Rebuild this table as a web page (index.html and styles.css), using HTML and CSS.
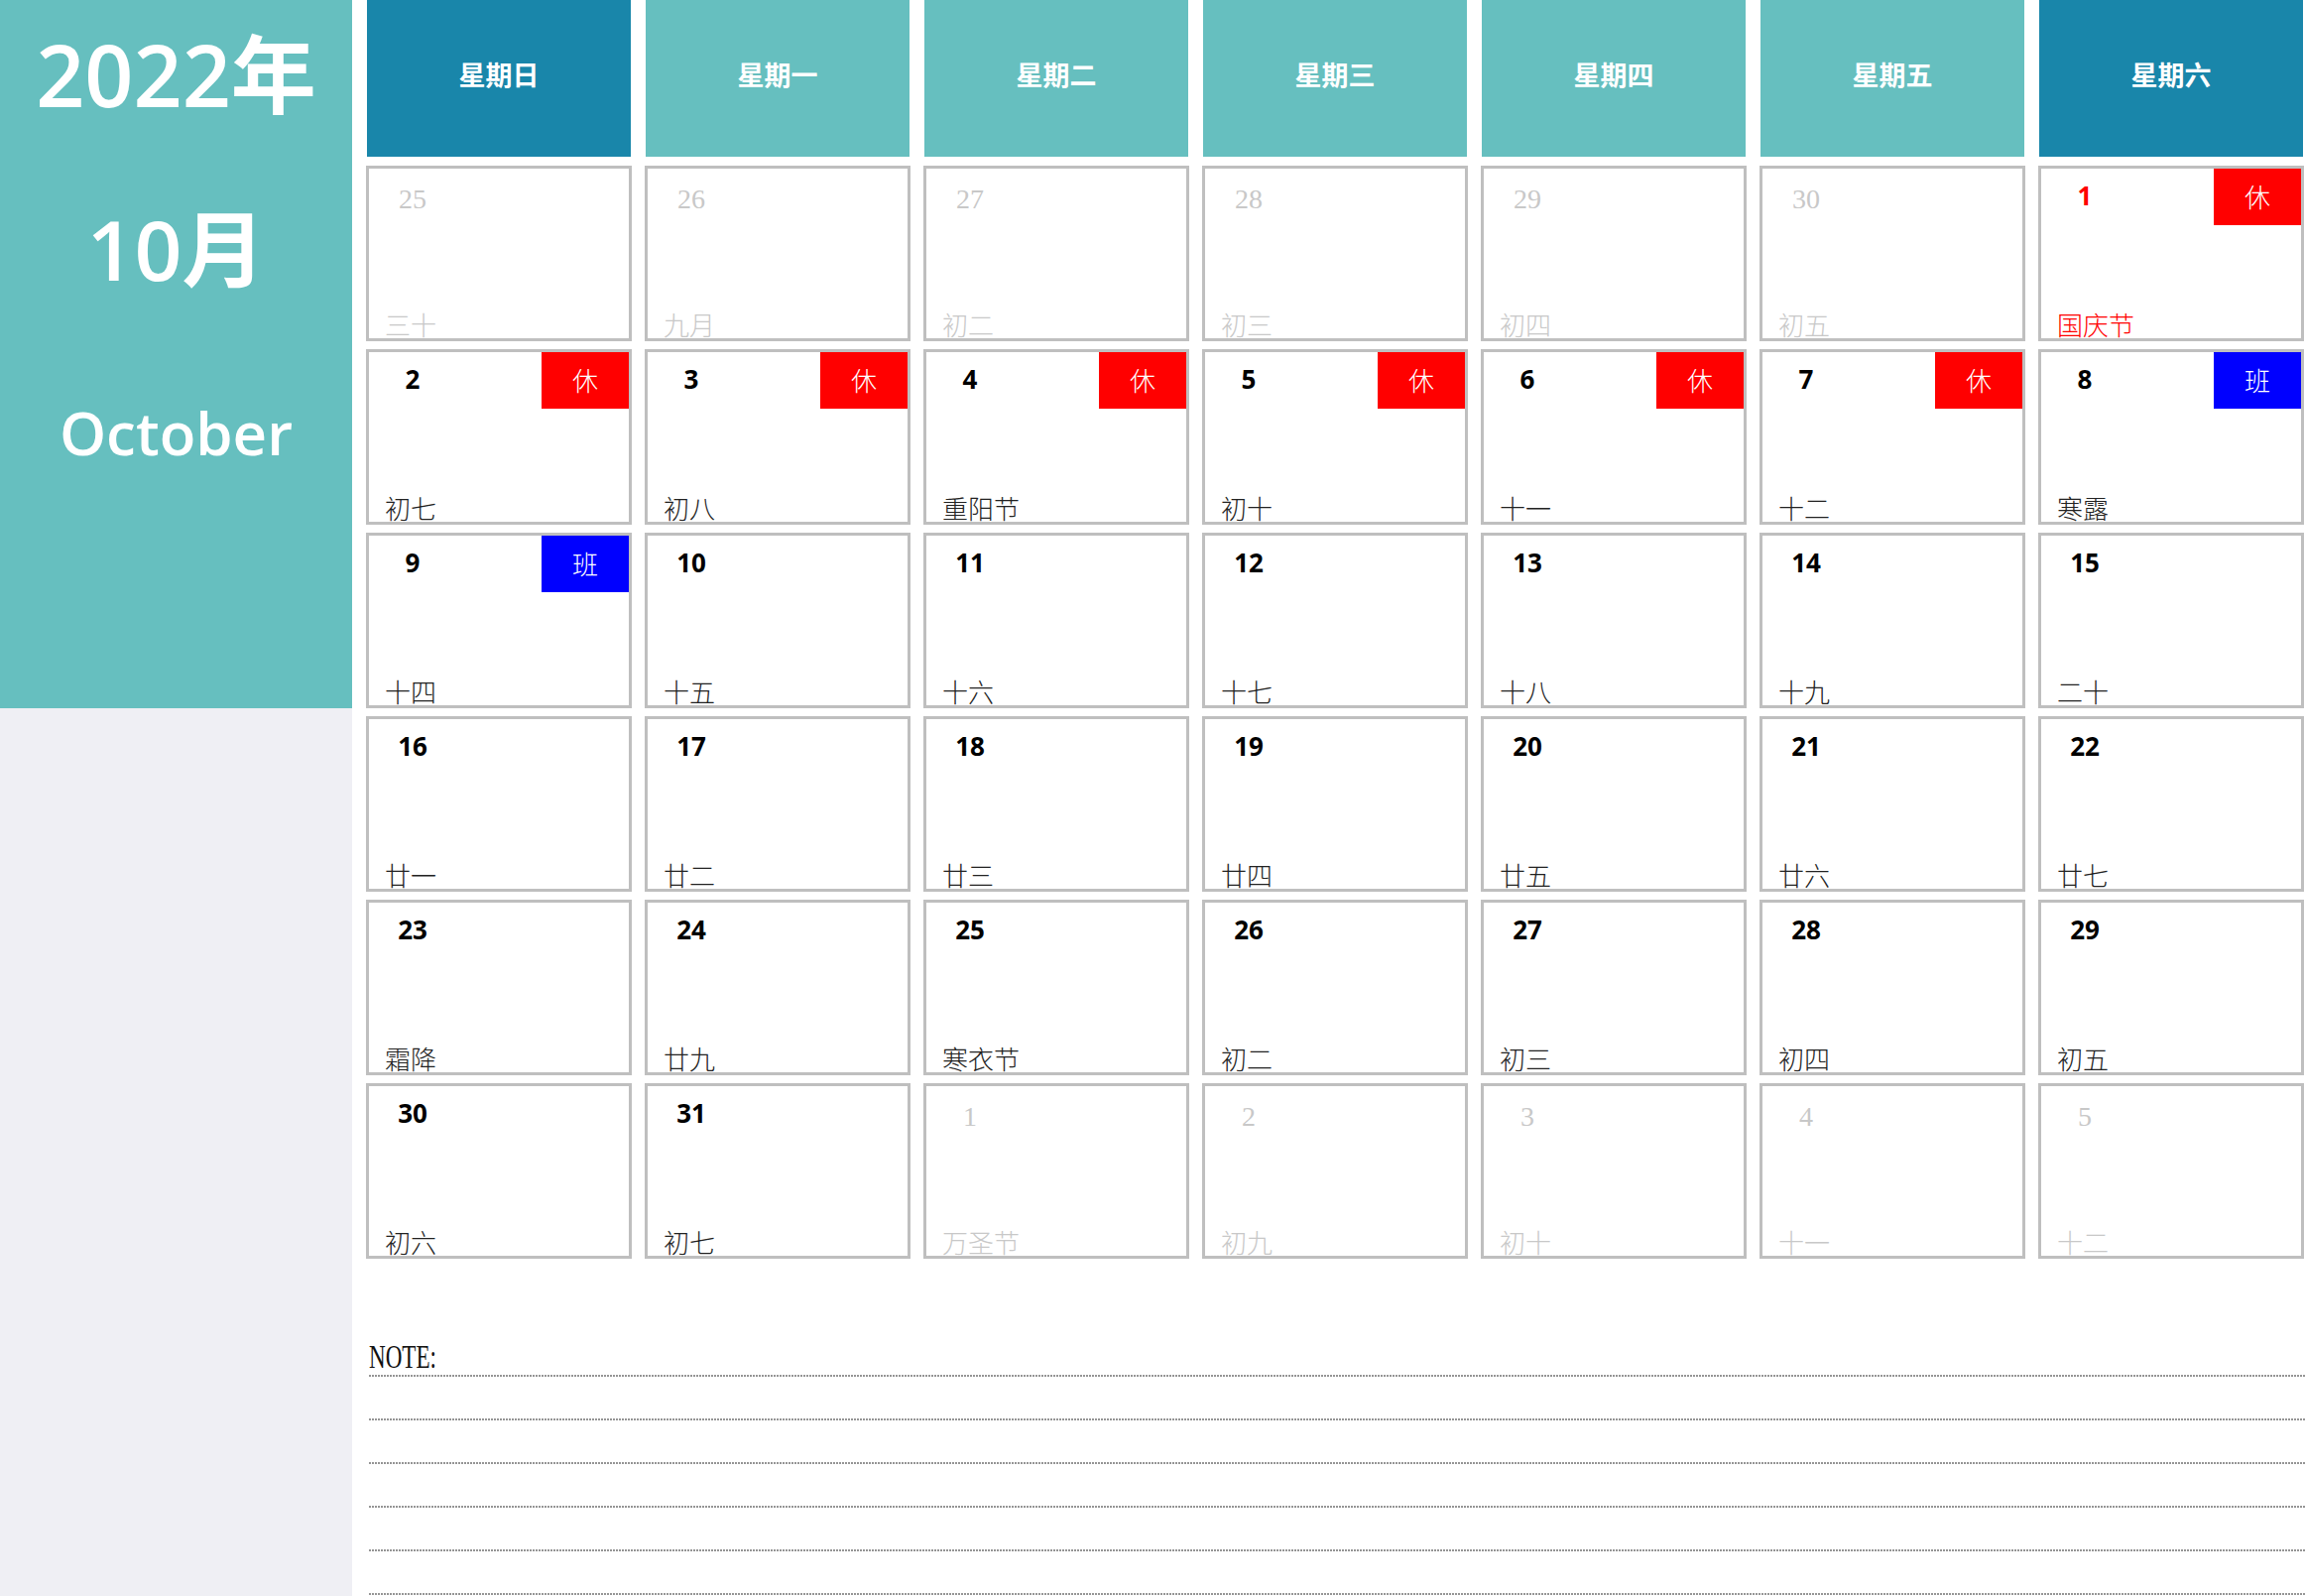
FILE: index.html
```html
<!DOCTYPE html>
<html lang="zh-CN">
<head>
<meta charset="utf-8">
<title>2022年10月日历</title>
<link rel="stylesheet" href="styles.css">
</head>
<body>
<div class="page">
  <aside class="side">
    <div class="side-top">
      <div class="year">2022<span class="cjk">年</span></div>
      <div class="month">10<span class="cjk">月</span></div>
      <div class="en">October</div>
    </div>
    <div class="side-bottom"></div>
  </aside>
  <main class="main">
    <div class="week">
      <div class="wd dark">星期日</div>
      <div class="wd">星期一</div>
      <div class="wd">星期二</div>
      <div class="wd">星期三</div>
      <div class="wd">星期四</div>
      <div class="wd">星期五</div>
      <div class="wd dark">星期六</div>
    </div>
    <div class="grid">
      <div class="cell other"><div class="top"><span class="num">25</span></div><span class="lunar">三十</span></div>
      <div class="cell other"><div class="top"><span class="num">26</span></div><span class="lunar">九月</span></div>
      <div class="cell other"><div class="top"><span class="num">27</span></div><span class="lunar">初二</span></div>
      <div class="cell other"><div class="top"><span class="num">28</span></div><span class="lunar">初三</span></div>
      <div class="cell other"><div class="top"><span class="num">29</span></div><span class="lunar">初四</span></div>
      <div class="cell other"><div class="top"><span class="num">30</span></div><span class="lunar">初五</span></div>
      <div class="cell fest"><div class="top"><span class="num">1</span><span class="badge rest">休</span></div><span class="lunar">国庆节</span></div>

      <div class="cell"><div class="top"><span class="num">2</span><span class="badge rest">休</span></div><span class="lunar">初七</span></div>
      <div class="cell"><div class="top"><span class="num">3</span><span class="badge rest">休</span></div><span class="lunar">初八</span></div>
      <div class="cell"><div class="top"><span class="num">4</span><span class="badge rest">休</span></div><span class="lunar">重阳节</span></div>
      <div class="cell"><div class="top"><span class="num">5</span><span class="badge rest">休</span></div><span class="lunar">初十</span></div>
      <div class="cell"><div class="top"><span class="num">6</span><span class="badge rest">休</span></div><span class="lunar">十一</span></div>
      <div class="cell"><div class="top"><span class="num">7</span><span class="badge rest">休</span></div><span class="lunar">十二</span></div>
      <div class="cell"><div class="top"><span class="num">8</span><span class="badge work">班</span></div><span class="lunar">寒露</span></div>

      <div class="cell"><div class="top"><span class="num">9</span><span class="badge work">班</span></div><span class="lunar">十四</span></div>
      <div class="cell"><div class="top"><span class="num">10</span></div><span class="lunar">十五</span></div>
      <div class="cell"><div class="top"><span class="num">11</span></div><span class="lunar">十六</span></div>
      <div class="cell"><div class="top"><span class="num">12</span></div><span class="lunar">十七</span></div>
      <div class="cell"><div class="top"><span class="num">13</span></div><span class="lunar">十八</span></div>
      <div class="cell"><div class="top"><span class="num">14</span></div><span class="lunar">十九</span></div>
      <div class="cell"><div class="top"><span class="num">15</span></div><span class="lunar">二十</span></div>

      <div class="cell"><div class="top"><span class="num">16</span></div><span class="lunar">廿一</span></div>
      <div class="cell"><div class="top"><span class="num">17</span></div><span class="lunar">廿二</span></div>
      <div class="cell"><div class="top"><span class="num">18</span></div><span class="lunar">廿三</span></div>
      <div class="cell"><div class="top"><span class="num">19</span></div><span class="lunar">廿四</span></div>
      <div class="cell"><div class="top"><span class="num">20</span></div><span class="lunar">廿五</span></div>
      <div class="cell"><div class="top"><span class="num">21</span></div><span class="lunar">廿六</span></div>
      <div class="cell"><div class="top"><span class="num">22</span></div><span class="lunar">廿七</span></div>

      <div class="cell"><div class="top"><span class="num">23</span></div><span class="lunar">霜降</span></div>
      <div class="cell"><div class="top"><span class="num">24</span></div><span class="lunar">廿九</span></div>
      <div class="cell"><div class="top"><span class="num">25</span></div><span class="lunar">寒衣节</span></div>
      <div class="cell"><div class="top"><span class="num">26</span></div><span class="lunar">初二</span></div>
      <div class="cell"><div class="top"><span class="num">27</span></div><span class="lunar">初三</span></div>
      <div class="cell"><div class="top"><span class="num">28</span></div><span class="lunar">初四</span></div>
      <div class="cell"><div class="top"><span class="num">29</span></div><span class="lunar">初五</span></div>

      <div class="cell"><div class="top"><span class="num">30</span></div><span class="lunar">初六</span></div>
      <div class="cell"><div class="top"><span class="num">31</span></div><span class="lunar">初七</span></div>
      <div class="cell other"><div class="top"><span class="num">1</span></div><span class="lunar">万圣节</span></div>
      <div class="cell other"><div class="top"><span class="num">2</span></div><span class="lunar">初九</span></div>
      <div class="cell other"><div class="top"><span class="num">3</span></div><span class="lunar">初十</span></div>
      <div class="cell other"><div class="top"><span class="num">4</span></div><span class="lunar">十一</span></div>
      <div class="cell other"><div class="top"><span class="num">5</span></div><span class="lunar">十二</span></div>
    </div>
    <div class="notes">
      <div class="note-line first"><span class="note-label">NOTE:</span></div>
      <div class="note-line"></div>
      <div class="note-line"></div>
      <div class="note-line"></div>
      <div class="note-line"></div>
      <div class="note-line"></div>
    </div>
  </main>
</div>
</body>
</html>
```

FILE: styles.css
```css
* { box-sizing: border-box; }

html, body {
  margin: 0;
  padding: 0;
  background: #ffffff;
}

body {
  width: 2324px;
  height: 1609px;
  overflow: hidden;
  font-family: "Noto Sans CJK SC", "Open Sans", sans-serif;
}

.page {
  display: flex;
  width: 2324px;
  height: 1609px;
}

/* ---------- sidebar ---------- */
.side {
  width: 355px;
  flex: 0 0 355px;
  display: flex;
  flex-direction: column;
}

.side-top {
  height: 714px;
  background: #66bfbf;
  color: #ffffff;
  text-align: center;
  padding-top: 21px;
  font-family: "Open Sans", "Noto Sans CJK SC", sans-serif;
  font-weight: 600;
}

.side-bottom {
  flex: 1;
  background: #efeff4;
}

.year {
  font-size: 86px;
  line-height: 100px;
  height: 100px;
}

.month {
  font-size: 84px;
  line-height: 100px;
  height: 100px;
  margin-top: 76px;
}

.cjk {
  font-family: "Noto Sans CJK SC", sans-serif;
  font-weight: 700;
}

.en {
  font-size: 60px;
  line-height: 80px;
  height: 80px;
  margin-top: 99px;
}

/* ---------- main ---------- */
.main {
  margin-left: 14px;
  width: 1955px;
  display: flex;
  flex-direction: column;
}

.week {
  display: grid;
  grid-template-columns: repeat(7, 268px);
  column-gap: 13px;
  height: 158px;
}

.wd {
  margin: 0 1px;
  background: #66bfbf;
  color: #ffffff;
  font-family: "Noto Sans CJK SC", sans-serif;
  font-weight: 700;
  font-size: 27px;
  display: flex;
  align-items: center;
  justify-content: center;
  padding-bottom: 10px;
}

.wd.dark {
  background: #1986aa;
}

.grid {
  margin-top: 9px;
  display: grid;
  grid-template-columns: repeat(7, 268px);
  grid-auto-rows: 177px;
  column-gap: 13px;
  row-gap: 8px;
}

.cell {
  border: 3px solid #bfbfbf;
  background: #ffffff;
  display: flex;
  flex-direction: column;
  justify-content: space-between;
}

.top {
  display: flex;
  justify-content: space-between;
  height: 57px;
}

.num {
  width: 88px;
  height: 57px;
  text-align: center;
  font-family: "Open Sans", sans-serif;
  font-weight: 700;
  font-size: 26px;
  line-height: 54px;
  color: #000000;
}

.badge {
  width: 88px;
  height: 57px;
  display: flex;
  align-items: center;
  justify-content: center;
  padding-bottom: 3px;
  color: #ffffff;
  font-family: "Noto Sans CJK SC", sans-serif;
  font-weight: 300;
  font-size: 26px;
}

.badge.rest { background: #ff0000; }
.badge.work { background: #0000ff; }

.lunar {
  display: block;
  padding-left: 16px;
  font-family: "Noto Sans CJK SC", sans-serif;
  font-weight: 300;
  font-size: 26px;
  line-height: 28px;
  color: #222222;
}

.cell.other .num {
  font-family: "Liberation Serif", serif;
  font-weight: 400;
  font-size: 28px;
  line-height: 62px;
  color: #c8c8c8;
}

.cell.other .lunar {
  color: #c8c8c8;
}

.cell.fest .num,
.cell.fest .lunar {
  color: #ff0000;
}

/* ---------- notes ---------- */
.notes {
  margin-top: 75px;
  padding-left: 3px;
}

.note-line {
  height: 44px;
  background-image: linear-gradient(to right, #959595 2px, transparent 2px);
  background-size: 3px 2px;
  background-repeat: repeat-x;
  background-position: left bottom;
}

.note-line.first {
  padding-top: 3px;
}

.note-label {
  display: inline-block;
  font-family: "Liberation Serif", serif;
  font-size: 33px;
  line-height: 42px;
  color: #111111;
  transform: scaleX(0.7);
  transform-origin: left center;
}
```
